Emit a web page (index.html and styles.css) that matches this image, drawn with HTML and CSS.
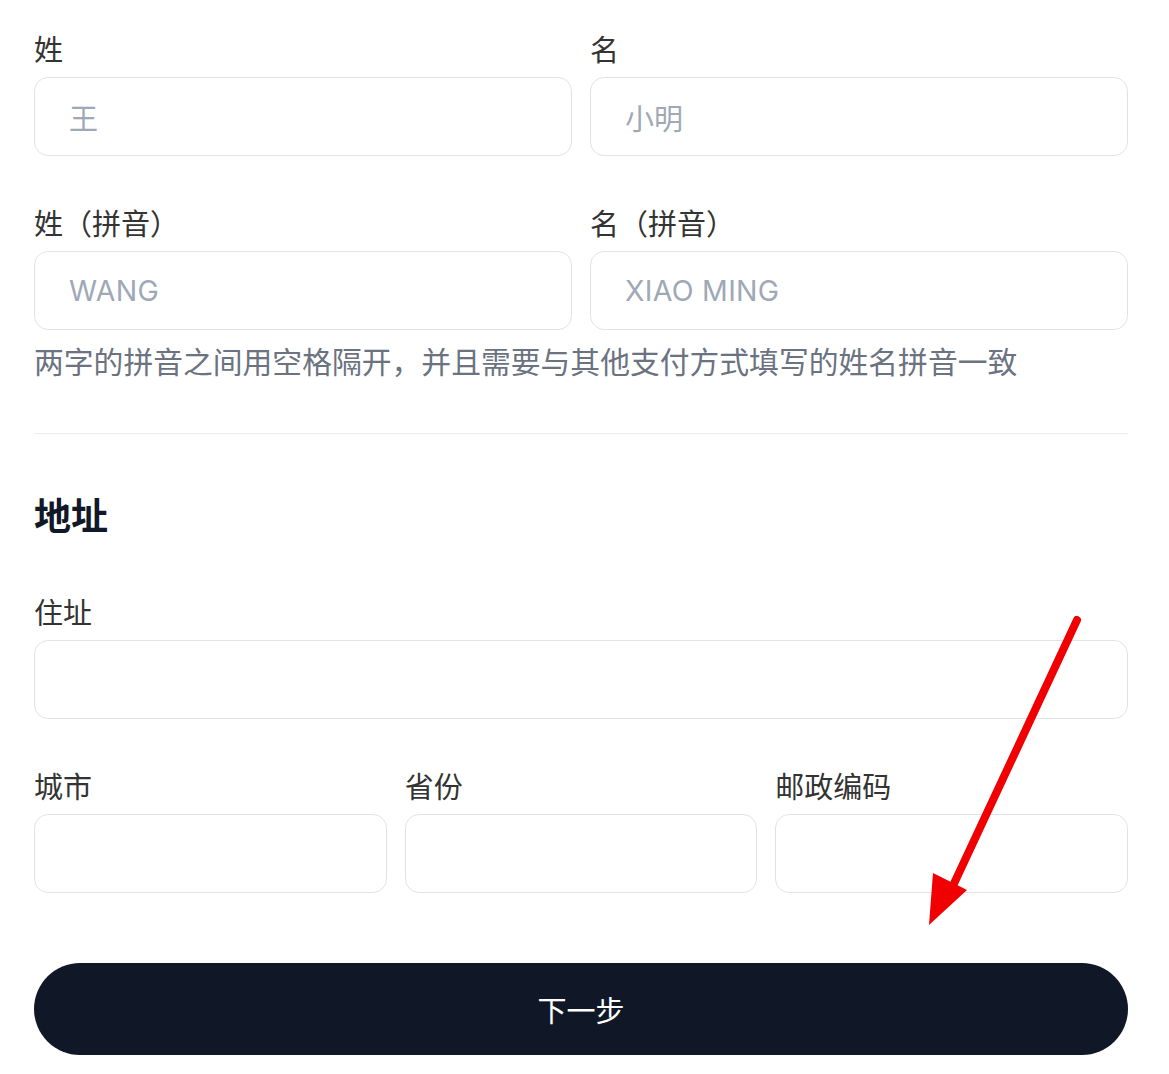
FILE: index.html
```html
<!DOCTYPE html>
<html>
<head>
  <meta charset="UTF-8">
  <title>填写信息</title>
  <link rel="stylesheet" href="styles.css">
</head>
<body>
  <div class="form">
    <div class="row row-2">
      <div class="field">
        <label>姓</label>
        <input type="text" placeholder="王">
      </div>
      <div class="field">
        <label>名</label>
        <input type="text" placeholder="小明">
      </div>
    </div>

    <div class="row row-2 row-tight">
      <div class="field">
        <label>姓（拼音）</label>
        <input type="text" class="latin" placeholder="WANG">
      </div>
      <div class="field">
        <label>名（拼音）</label>
        <input type="text" class="latin" placeholder="XIAO MING">
      </div>
    </div>
    <p class="hint">两字的拼音之间用空格隔开，并且需要与其他支付方式填写的姓名拼音一致</p>

    <hr class="divider">

    <h2 class="section-title">地址</h2>

    <div class="row">
      <div class="field">
        <label>住址</label>
        <input type="text">
      </div>
    </div>

    <div class="row row-3 row-tight">
      <div class="field">
        <label>城市</label>
        <input type="text">
      </div>
      <div class="field">
        <label>省份</label>
        <input type="text">
      </div>
      <div class="field">
        <label>邮政编码</label>
        <input type="text">
      </div>
    </div>

    <button class="btn-next">下一步</button>
  </div>

  <!-- 标注箭头 -->
  <svg class="arrow" width="170" height="325" viewBox="0 0 170 325">
    <line x1="157" y1="10" x2="31" y2="280" stroke="#f00000" stroke-width="8" stroke-linecap="round"/>
    <polygon points="13,263 47,280 9,315" fill="#f00000"/>
  </svg>
</body>
</html>
```

FILE: styles.css
```css
body {
  font-family: "Noto Sans CJK SC", "Noto Sans", sans-serif;
  margin: 0;
  padding: 26px 0 0 0;
  background-color: #fff;
  color: #333;
  position: relative;
}
.form {
  margin-left: 34px;
  width: 1094px;
}
.row {
  display: grid;
  gap: 18px;
  margin-bottom: 44px;
}
.row-2 {
  grid-template-columns: 1fr 1fr;
}
.row-3 {
  grid-template-columns: 1fr 1fr 1fr;
}
.row-tight {
  margin-bottom: 0;
}
.field label {
  display: block;
  font-size: 29px;
  line-height: 45px;
  margin-bottom: 6px;
  color: #333;
}
.field input {
  display: block;
  width: 100%;
  height: 79px;
  box-sizing: border-box;
  border: 1px solid #dfe3e8;
  border-radius: 14px;
  padding: 0 34px;
  font-family: "Noto Sans CJK SC", sans-serif;
  font-size: 29px;
  color: #333;
  background: #fff;
  outline: none;
}
.field input::placeholder {
  color: #9ea8b6;
}
.field input.latin {
  font-family: Inter, "Noto Sans CJK SC", sans-serif;
  font-size: 28.5px;
  letter-spacing: 0.3px;
}
.hint {
  margin: 8px 0 0 0;
  font-size: 29.8px;
  line-height: 45px;
  color: #6b7280;
  white-space: nowrap;
}
.divider {
  border: none;
  border-top: 1px solid #ebedf0;
  margin: 50px 0 0 0;
}
.section-title {
  margin: 54px 0 48px 0;
  font-size: 37px;
  line-height: 53px;
  font-weight: 700;
  color: #111827;
}
.btn-next {
  display: block;
  width: 100%;
  height: 92px;
  margin-top: 70px;
  border: none;
  border-radius: 46px;
  background-color: #101828;
  color: #fff;
  font-family: "Noto Sans CJK SC", sans-serif;
  font-size: 29px;
  cursor: pointer;
}
.arrow {
  position: absolute;
  left: 920px;
  top: 610px;
}
```
